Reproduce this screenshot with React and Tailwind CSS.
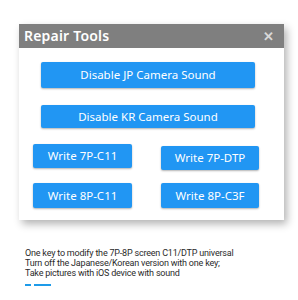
export default function App() {
  const btn =
    "flex items-center justify-center bg-[#2196f3] text-white text-[11.5px] rounded-[2px] shadow-[0_1px_2px_rgba(0,0,0,0.3)]";
  return (
    <div className="w-[298px] h-[300px] bg-white overflow-hidden" style={{ fontFamily: "'Noto Sans', sans-serif" }}>
      <div className="ml-[19px] mt-[24px] w-[265px] h-[196px] bg-white shadow-[3px_4px_8px_rgba(0,0,0,0.3)]">
        <div className="h-[24px] bg-[#7f7f7f] flex items-center justify-between pl-[5px] pr-[10px]">
          <span className="text-white text-[14px] font-semibold leading-none tracking-[0.2px]">Repair Tools</span>
          <span className="text-[#d8d8d8] text-[13px] font-bold leading-none">✕</span>
        </div>
        <div className="pt-[14px] flex flex-col">
          <div className={`${btn} ml-[22px] w-[214px] h-[26px]`}>Disable JP Camera Sound</div>
          <div className={`${btn} ml-[22px] w-[214px] h-[23px] mt-[17px]`}>Disable KR Camera Sound</div>
          <div className="flex mt-[16px]">
            <div className={`${btn} ml-[14px] w-[99px] h-[24px]`}>Write 7P-C11</div>
            <div className={`${btn} ml-[29px] w-[98px] h-[24px] mt-[2px]`}>Write 7P-DTP</div>
          </div>
          <div className="flex mt-[13px]">
            <div className={`${btn} ml-[14px] w-[99px] h-[25px]`}>Write 8P-C11</div>
            <div className={`${btn} ml-[29px] w-[98px] h-[25px]`}>Write 8P-C3F</div>
          </div>
        </div>
      </div>
      <div className="ml-[25px] mt-[28px] text-[9px] leading-[10px] text-[#2a2a2a] tracking-[-0.2px]" style={{ fontFamily: "Roboto, sans-serif" }}>
        <div>One key to modify the 7P-8P screen C11/DTP universal</div>
        <div>Turn off the Japanese/Korean version with one key;</div>
        <div>Take pictures with iOS device with sound</div>
      </div>
      <div className="ml-[25px] mt-[6px] flex gap-[3px]">
        <div className="w-[6px] h-[2px] bg-[#1e9be9]" />
        <div className="w-[17px] h-[2px] bg-[#1e9be9]" />
      </div>
    </div>
  );
}
